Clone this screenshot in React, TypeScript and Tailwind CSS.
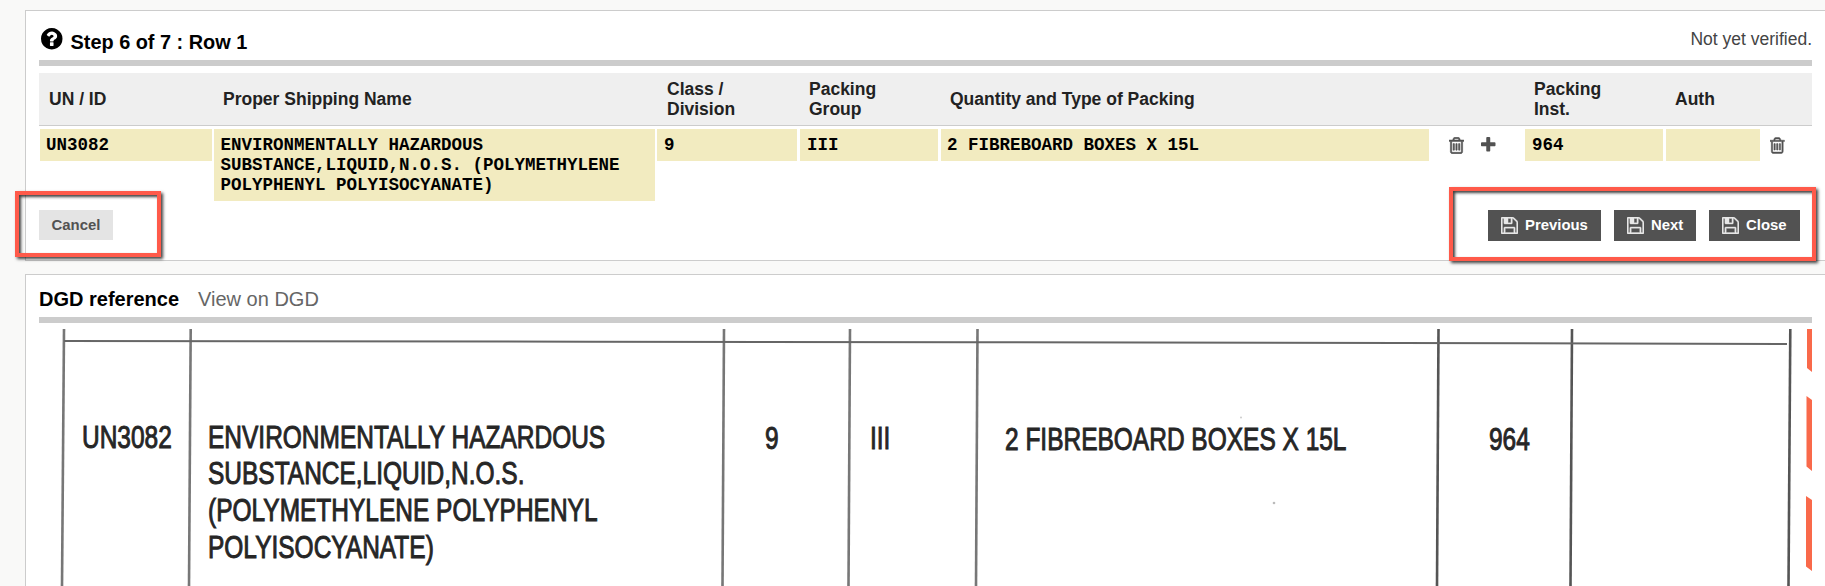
import { ReactNode } from "react";

const SANS = "font-['Liberation_Sans',Arial,sans-serif]";
const MONO = "font-['Liberation_Mono','Courier_New',monospace]";
const COLUMNS = "grid grid-cols-[174px_444px_142px_141px_584px_141px_147px]";

const headers = ["UN / ID", "Proper Shipping Name", "Class /\nDivision", "Packing\nGroup", "Quantity and Type of Packing", "Packing\nInst.", "Auth"];

const scanLines = [
    [25, 23], [151.7, 150], [685, 683.5], [811, 809.5], [938.5, 937], [1399.5, 1398], [1533, 1531.5], [1751.3, 1749.5],
];

const icons = {
    help: {
        box: "128 128 1536 1536",
        path: "M1024 1376v-192q0-14-9-23t-23-9h-192q-14 0-23 9t-9 23v192q0 14 9 23t23 9h192q14 0 23-9t9-23zm256-672q0-88-55.5-163t-138.5-116-170-41q-243 0-371 213-15 24 8 42l132 100q7 6 19 6 16 0 25-12 53-68 86-92 34-24 86-24 48 0 85.5 26t37.5 59q0 38-20 61t-68 45q-63 28-115.5 86.5t-52.5 125.5v36q0 14 9 23t23 9h192q14 0 23-9t9-23q0-19 21.5-49.5t54.5-49.5q32-18 49-28.5t46-35 44.5-48 28-60.5 12.5-81zm384 192q0 209-103 385.5t-279.5 279.5-385.5 103-385.5-103-279.5-279.5-103-385.5 103-385.5 279.5-279.5 385.5-103 385.5 103 279.5 279.5 103 385.5z",
    },
    trash: {
        box: "192 128 1408 1536",
        path: "M704 736v576q0 14-9 23t-23 9h-64q-14 0-23-9t-9-23v-576q0-14 9-23t23-9h64q14 0 23 9t9 23zm256 0v576q0 14-9 23t-23 9h-64q-14 0-23-9t-9-23v-576q0-14 9-23t23-9h64q14 0 23 9t9 23zm256 0v576q0 14-9 23t-23 9h-64q-14 0-23-9t-9-23v-576q0-14 9-23t23-9h64q14 0 23 9t9 23zm128 724v-948h-896v948q0 22 7 40.5t14.5 27 10.5 8.5h832q3 0 10.5-8.5t14.5-27 7-40.5zm-672-1076h448l-48-117q-7-9-17-11h-317q-10 2-17 11zm928 32v64q0 14-9 23t-23 9h-96v948q0 83-47 143.5t-113 60.5h-832q-66 0-113-58.5t-47-141.5v-952h-96q-14 0-23-9t-9-23v-64q0-14 9-23t23-9h309l70-167q15-37 54-63t79-26h320q40 0 79 26t54 63l70 167h309q14 0 23 9t9 23z",
    },
    plus: {
        box: "192 128 1408 1408",
        path: "M1600 736v192q0 40-28 68t-68 28h-416v416q0 40-28 68t-68 28h-192q-40 0-68-28t-28-68v-416h-416q-40 0-68-28t-28-68v-192q0-40 28-68t68-28h416v-416q0-40 28-68t68-28h192q40 0 68 28t28 68v416h416q40 0 68 28t28 68z",
    },
    save: {
        box: "128 128 1536 1536",
        path: "M512 1536h768v-384h-768v384zm896 0h128v-896q0-14-10-38.5t-20-34.5l-281-281q-10-10-34-20t-39-10v416q0 40-28 68t-68 28h-576q-40 0-68-28t-28-68v-416h-128v1280h128v-416q0-40 28-68t68-28h832q40 0 68 28t28 68v416zm-384-928v-320q0-13-9.5-22.5t-22.5-9.5h-192q-13 0-22.5 9.5t-9.5 22.5v320q0 13 9.5 22.5t22.5 9.5h192q13 0 22.5-9.5t9.5-22.5zm640 32v928q0 40-28 68t-68 28h-1344q-40 0-68-28t-28-68v-1344q0-40 28-68t68-28h928q40 0 88 20t76 48l280 280q28 28 48 76t20 88z",
    },
};

function Icon({ name, className }: { name: keyof typeof icons; className: string }) {
    return (
        <svg viewBox={icons[name].box} className={className} fill="currentColor" aria-hidden="true">
            <path d={icons[name].path} />
        </svg>
    );
}

function Field({ children, className }: { children?: ReactNode; className: string }) {
    return <div className={`min-h-8 bg-[#f2ebc0] py-1.5 whitespace-pre-line ${className}`}>{children}</div>;
}

function SaveButton({ label, className }: { label: string; className: string }) {
    return (
        <button className={`flex h-[31px] items-center gap-[7px] bg-[#525252] pl-[13px] text-[14.9px] font-bold text-white ${className}`}>
            <Icon name="save" className="h-[17px] w-[17px] stroke-[#e8e8e8] stroke-[30] text-[#e8e8e8]" />
            {label}
        </button>
    );
}

function ScanText({ children, className }: { children: ReactNode; className: string }) {
    return (
        <div className={`origin-left scale-x-[0.765] text-[32px] leading-[36.7px] whitespace-pre text-[#262626] [-webkit-text-stroke:1px_#262626] ${className}`}>
            {children}
        </div>
    );
}

export default function App() {
    return (
        <div className={`h-[586px] overflow-hidden bg-[#f9f9f8] pt-[10px] pl-[25px] ${SANS}`}>
            <section className="relative h-[251px] border-y border-l border-[#ccc] bg-white pr-[13px] pl-[13px]">
                <header className="flex h-[55px] items-start justify-between border-b-6 border-[#ccc]">
                    <div className="flex items-start pl-0.5">
                        <Icon name="help" className="mt-[17px] h-[21.5px] w-[21.5px]" />
                        <h1 className="mt-[19px] ml-2 text-[19.9px] leading-6 font-bold text-black">Step 6 of 7 : Row 1</h1>
                    </div>
                    <span className="mt-[18px] text-[17.5px] leading-5 text-[#444]">Not yet verified.</span>
                </header>

                <div className={`mt-[7px] h-[53px] items-center border-b border-[#ccc] bg-[#efefef] text-[17.5px] leading-5 font-bold text-[#222] ${COLUMNS}`}>
                    {headers.map(header => (
                        <span key={header} className="pl-2.5 whitespace-pre">{header}</span>
                    ))}
                </div>

                <div className={`mt-[3px] h-[81px] items-start text-[17.5px] leading-5 font-bold text-black ${MONO} ${COLUMNS}`}>
                    <Field className="mx-px pl-1.5">UN3082</Field>
                    <Field className="mr-0.5 ml-px pl-[6.5px]">
                        {"ENVIRONMENTALLY HAZARDOUS\nSUBSTANCE,LIQUID,N.O.S. (POLYMETHYLENE\nPOLYPHENYL POLYISOCYANATE)"}
                    </Field>
                    <Field className="mr-0.5 pl-[7px]">9</Field>
                    <Field className="mr-0.5 ml-px pl-[7px]">III</Field>
                    <div className="flex pl-px text-[#525252]">
                        <Field className="w-[488px] pl-1.5 text-black">2 FIBREBOARD BOXES X 15L</Field>
                        <Icon name="trash" className="mt-2 ml-5 h-4.25 w-[15px] stroke-current stroke-[50]" />
                        <Icon name="plus" className="mt-2 ml-[17px] h-[14.5px] w-[14.5px]" />
                    </div>
                    <Field className="mr-0.5 ml-px pl-[7px]">964</Field>
                    <div className="flex pl-px text-[#525252]">
                        <Field className="w-[94px]" />
                        <Icon name="trash" className="mt-2 ml-2.5 h-4.25 w-[14.5px] stroke-current stroke-[50]" />
                    </div>
                </div>

                <footer className="flex items-start justify-between pr-3">
                    <button className="h-[30px] w-[74px] bg-[#e4e4e4] text-[14.9px] font-bold text-[#525252]">Cancel</button>
                    <div className="flex gap-[13px]">
                        <SaveButton label="Previous" className="w-[113px]" />
                        <SaveButton label="Next" className="w-[82px]" />
                        <SaveButton label="Close" className="w-[91px]" />
                    </div>
                </footer>

                {/* highlight frames over the action buttons */}
                <div className="absolute top-[180px] left-[-11px] z-10 h-[66px] w-[146px] border-4 border-[#ff5a4a] shadow-[2px_2px_3px_rgba(0,0,0,0.75),inset_2px_2px_3px_rgba(0,0,0,0.75)]" />
                <div className="absolute top-[176px] left-[1423px] z-10 h-[74px] w-[367px] border-4 border-[#ff5a4a] shadow-[2px_2px_3px_rgba(0,0,0,0.75),inset_2px_2px_3px_rgba(0,0,0,0.75)]" />
            </section>

            <section className="mt-[13px] h-[312px] border-t border-l border-[#ccc] bg-white pr-[13px] pl-[13px]">
                <header className="flex h-12 items-start gap-[19px] border-b-6 border-[#ccc] pt-3 text-[20px] leading-6">
                    <h2 className="font-bold text-black">DGD reference</h2>
                    <a className="text-[#666]">View on DGD</a>
                </header>

                <div className="relative mt-1.5 h-[257px] overflow-hidden">
                    <svg viewBox="0 0 1773 257" className="absolute inset-0 h-[257px] w-[1773px]" fill="none">
                        {scanLines.map(([top, bottom], i) => (
                            <path key={top} d={`M${top} 0L${bottom} 257`} stroke={i > 4 ? "#555" : "#777"} strokeWidth="2.6" />
                        ))}
                        <path d="M25 12L550 12.7L941 13.2L1360 14L1748 15" stroke="#666" strokeWidth="2" />
                        <path d="M1768 0h5v43l-5-4zM1767.5 67l5.5 4v71l-5.5-4.5zM1767 167l6 4v71l-6-4.5z" fill="#f9694a" />
                        <circle cx="1202" cy="88.5" r="1" fill="#ccc" />
                        <circle cx="1235" cy="174" r="1.3" fill="#bbb" />
                    </svg>
                    <div className="relative grid grid-cols-[151px_534px_126px_127px_461px_374px] pt-[89.5px]">
                        <ScanText className="ml-[43px]">UN3082</ScanText>
                        <ScanText className="ml-[17.5px]">{"ENVIRONMENTALLY HAZARDOUS\nSUBSTANCE,LIQUID,N.O.S.\n(POLYMETHYLENE POLYPHENYL\nPOLYISOCYANATE)"}</ScanText>
                        <ScanText className="mt-px ml-[41px]">9</ScanText>
                        <ScanText className="mt-px ml-[20px]">III</ScanText>
                        <ScanText className="mt-0.5 ml-[28px]">2 FIBREBOARD BOXES X 15L</ScanText>
                        <ScanText className="mt-0.5 ml-[50.5px]">964</ScanText>
                    </div>
                </div>
            </section>
        </div>
    );
}
